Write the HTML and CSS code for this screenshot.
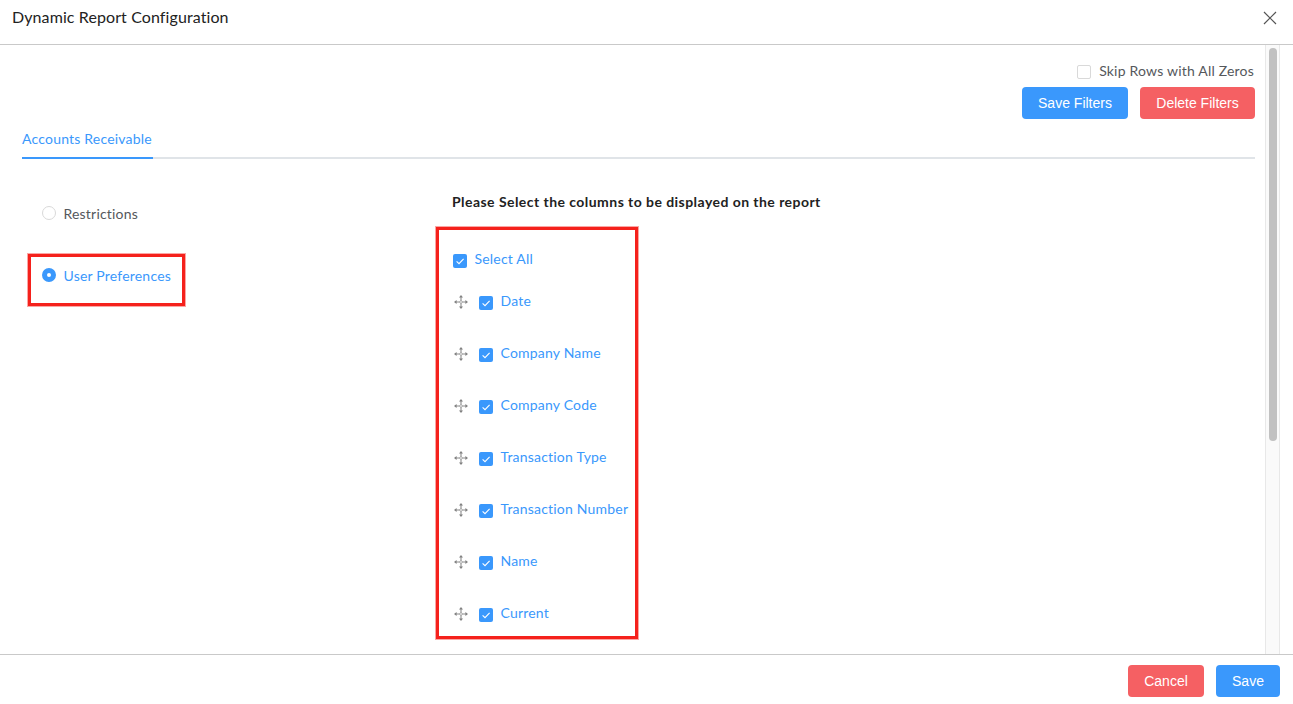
FILE: index.html
```html
<!DOCTYPE html>
<html lang="en">
<head>
<meta charset="utf-8">
<title>Dynamic Report Configuration</title>
<link rel="stylesheet" href="styles.css">
</head>
<body>
<svg class="defs" width="0" height="0" aria-hidden="true">
  <symbol id="move" viewBox="0 0 14 14">
    <path d="M7 2v10M2 7h10" fill="none" stroke="#8c8c8c" stroke-width="1.1"/>
    <circle cx="7" cy="7" r="1.3" fill="#fff" stroke="#a0a0a0" stroke-width=".8"/>
    <path d="M7 0 9 2.6H5zM7 14 5 11.4h4zM0 7 2.6 5v4zM14 7 11.4 9V5z" fill="#808080"/>
  </symbol>
  <symbol id="tick" viewBox="0 0 14 14">
    <rect width="14" height="14" rx="2" fill="#3a98fc"/>
    <path d="M3.6 7.3 6 9.6 10.6 4.8" fill="none" stroke="#fff" stroke-width="1.1"/>
  </symbol>
</svg>
<div class="modal">
  <header class="modal-head">
    <h1 class="modal-title">Dynamic Report Configuration</h1>
    <svg class="close" width="14" height="14" viewBox="0 0 14 14"><path d="M1 1l12 12M13 1L1 13" stroke="#555" stroke-width="1.2" fill="none"/></svg>
  </header>
  <div class="modal-body">
    <main class="content">
      <div class="skip-row">
        <span class="box-empty"></span>
        <span class="skip-label">Skip Rows with All Zeros</span>
      </div>
      <div class="action-row">
        <button class="btn btn-blue btn-save-filters">Save Filters</button>
        <button class="btn btn-red btn-delete-filters">Delete Filters</button>
      </div>
      <div class="tabs"><span class="tab-active">Accounts Receivable</span></div>
      <div class="panes">
        <nav class="side">
          <div class="radio-row"><span class="radio"></span><span class="radio-label">Restrictions</span></div>
          <div class="radio-row radio-on mark-side"><span class="radio"></span><span class="radio-label">User Preferences</span></div>
        </nav>
        <section class="columns">
          <h2 class="columns-title">Please Select the columns to be displayed on the report</h2>
          <div class="mark-list">
            <div class="select-all"><svg class="tick"><use href="#tick"/></svg><span class="col-label">Select All</span></div>
            <div class="col-row"><svg class="move"><use href="#move"/></svg><svg class="tick"><use href="#tick"/></svg><span class="col-label">Date</span></div>
            <div class="col-row"><svg class="move"><use href="#move"/></svg><svg class="tick"><use href="#tick"/></svg><span class="col-label">Company Name</span></div>
            <div class="col-row"><svg class="move"><use href="#move"/></svg><svg class="tick"><use href="#tick"/></svg><span class="col-label">Company Code</span></div>
            <div class="col-row"><svg class="move"><use href="#move"/></svg><svg class="tick"><use href="#tick"/></svg><span class="col-label">Transaction Type</span></div>
            <div class="col-row"><svg class="move"><use href="#move"/></svg><svg class="tick"><use href="#tick"/></svg><span class="col-label">Transaction Number</span></div>
            <div class="col-row"><svg class="move"><use href="#move"/></svg><svg class="tick"><use href="#tick"/></svg><span class="col-label">Name</span></div>
            <div class="col-row"><svg class="move"><use href="#move"/></svg><svg class="tick"><use href="#tick"/></svg><span class="col-label">Current</span></div>
          </div>
        </section>
      </div>
    </main>
    <div class="scrollbar"><div class="thumb"></div></div>
  </div>
  <footer class="modal-foot">
    <button class="btn btn-red btn-cancel">Cancel</button>
    <button class="btn btn-blue btn-ok">Save</button>
  </footer>
</div>
</body>
</html>
```
FILE: styles.css
```css
*, *::after { box-sizing: border-box; }
html, body { margin: 0; height: 100%; overflow: hidden; background: #fff; }
body { font-family: Lato, "Open Sans", sans-serif; color: #222; }
.defs { position: absolute; }
.modal { height: 704px; display: flex; flex-direction: column; }
.modal-head {
  height: 45px; flex: none; display: flex; align-items: center; justify-content: space-between;
  padding: 0 16px 10px 12px; border-bottom: 1px solid #c9c9c9;
}
.modal-title { margin: 0 0 2px; font-size: 16px; font-weight: 400; color: #222; letter-spacing: .1px; }
.close { display: block; margin-top: 2px; }
.modal-body { flex: 1; min-height: 0; display: flex; padding-right: 13px; overflow: hidden; }
.content { flex: 1; min-width: 0; padding: 0 10px 0 22px; }
.skip-row { height: 42px; padding-top: 8px; display: flex; justify-content: flex-end; align-items: center; }
.box-empty { width: 14px; height: 14px; border: 1px solid #d9d9d9; border-radius: 2px; margin: 4px 8px 0 0; }
.skip-label { font-size: 14px; color: #55585c; letter-spacing: .2px; margin-right: 1px; }
.action-row { display: flex; justify-content: flex-end; gap: 12px; }
.btn {
  height: 32px; border: 0; border-radius: 4px; color: #fff; padding: 0;
  font-family: "Liberation Sans", Arial, sans-serif; font-size: 14px;
}
.btn-blue { background: #3a98fc; }
.btn-red { background: #f56063; }
.btn-save-filters { width: 106px; }
.btn-delete-filters { width: 115px; }
.btn-cancel { width: 76px; }
.btn-ok { width: 64px; }
.tabs { height: 40px; border-bottom: 2px solid #e0e4e8; display: flex; }
.tab-active {
  width: 131px; margin-bottom: -2px; border-bottom: 2px solid #3a98fc; color: #3a98fc;
  font-size: 14px; display: flex; align-items: center; white-space: nowrap; letter-spacing: .2px;
}
.panes { display: flex; }
.side { width: 430px; flex: none; padding: 44px 0 0 20px; }
.radio-row { position: relative; display: flex; align-items: center; gap: 7.5px; height: 20px; margin-bottom: 42px; }
.radio { width: 14px; height: 14px; border-radius: 50%; border: 1px solid #d9d9d9; flex: none; background: #fff; }
.radio-label { font-size: 14px; color: #55585c; letter-spacing: .2px; }
.radio-on .radio { border: 5px solid #3a98fc; }
.radio-on .radio-label { color: #3a98fc; }
.mark-side::after {
  content: ""; position: absolute; left: -14px; top: -11px; width: 157px; height: 52px;
  border: 3px solid #f5211c; box-shadow: 0 0 0 1px rgba(245, 33, 28, .4);
}
.columns { flex: 1; }
.columns-title { margin: 33px 0 0; font-size: 14px; line-height: 20px; font-weight: 700; color: #222; letter-spacing: .45px; }
.mark-list { position: relative; margin-top: 35px; width: 176px; }
.mark-list::after {
  content: ""; position: absolute; left: -16px; top: -20px; width: 202px; height: 412px;
  border: 3px solid #f5211c; box-shadow: 0 0 0 1px rgba(245, 33, 28, .4);
}
.select-all { display: flex; align-items: center; gap: 7.5px; height: 26px; margin-bottom: 16px; padding-left: 1px; }
.col-row { display: flex; align-items: center; height: 26px; margin-bottom: 26px; }
.move { width: 14px; height: 14px; margin-left: 2px; flex: none; }
.tick { width: 14px; height: 14px; flex: none; display: block; margin-top: 2px; }
.col-row .tick { margin-left: 11px; margin-right: 7.5px; }
.col-label { font-size: 14px; color: #3a98fc; white-space: nowrap; margin-bottom: 4px; letter-spacing: .2px; }
.scrollbar {
  width: 15px; flex: none; background: #fafafa; border-left: 1px solid #e8e8e8; border-right: 1px solid #e8e8e8;
  padding: 3px 2px 0 3px;
}
.thumb { height: 393px; background: #c1c1c1; border-radius: 4px; }
.modal-foot {
  height: 50px; flex: none; border-top: 1px solid #c9c9c9; display: flex; justify-content: flex-end;
  gap: 12px; padding: 10px 13px 0 0;
}
```
